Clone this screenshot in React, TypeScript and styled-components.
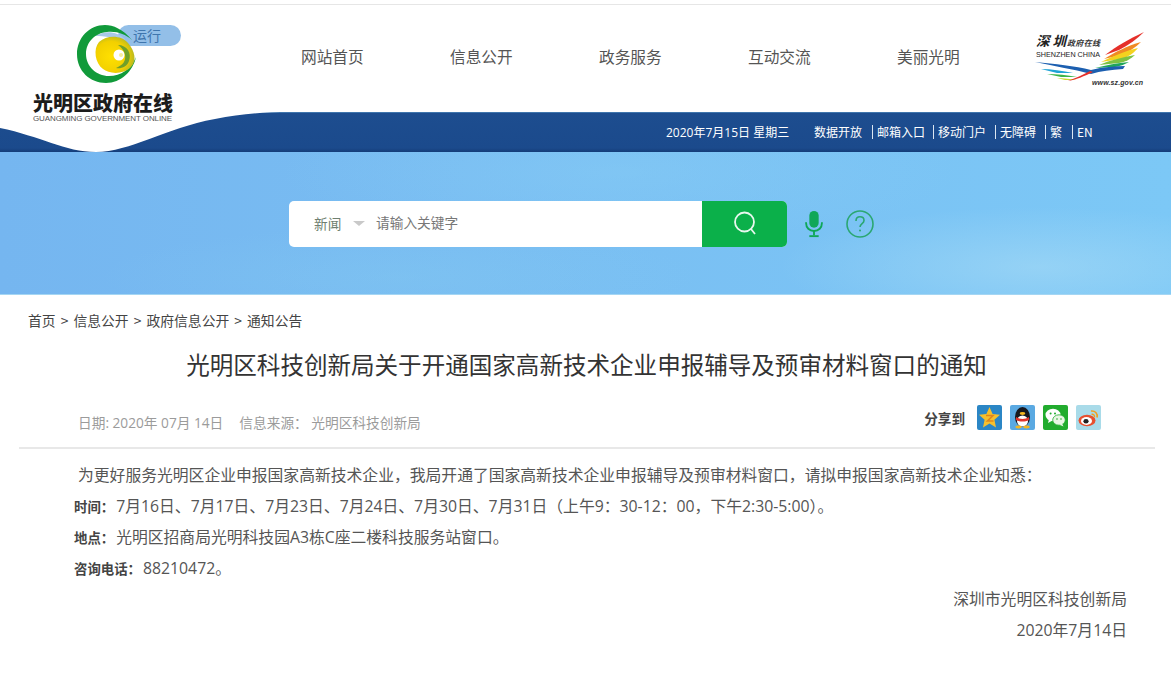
import styled, { createGlobalStyle } from 'styled-components'

const GlobalStyle = createGlobalStyle`
  html, body {
    margin: 0;
    padding: 0;
    background: #fff;
  }
  body {
    font-family: "Open Sans", "Noto Sans CJK SC", sans-serif;
    color: #555;
  }
`

const Page = styled.div`
  width: 1171px;
  height: 683px;
  overflow: hidden;
  background: #fff;
`

const Header = styled.header`
  position: relative;
  height: 152px;
  box-sizing: border-box;
  padding-top: 4px;
`

const TopLine = styled.div`
  height: 1px;
  background: #e6e6e6;
`

const TopRow = styled.div`
  display: flex;
  align-items: flex-start;
  height: 107px;
`

const LogoBlock = styled.div`
  position: relative;
  z-index: 2;
  width: 301px;
  flex: none;
  box-sizing: border-box;
  padding: 20px 0 0 33px;
`

const LogoMark = styled.svg`
  display: block;
  width: 148px;
  height: 60px;
`

const LogoTitle = styled.div`
  font-family: "Noto Sans CJK SC", sans-serif;
  font-size: 20px;
  line-height: 22px;
  font-weight: 900;
  color: #1c1c1c;
  white-space: nowrap;
  margin-top: 7px;
`

const LogoSub = styled.div`
  font-family: "Liberation Sans", sans-serif;
  font-size: 8px;
  line-height: 10px;
  color: #555;
  letter-spacing: -0.1px;
  white-space: nowrap;
`

const Nav = styled.nav`
  display: flex;
  gap: 86px;
  padding-top: 40px;
`

const NavItem = styled.a`
  font-family: "Noto Sans CJK SC", sans-serif;
  font-size: 15.7px;
  line-height: 24px;
  width: 63px;
  white-space: nowrap;
  color: #555;
`

const SzLogo = styled.svg`
  display: block;
  width: 114px;
  height: 62px;
  margin: 23px 0 0 73px;
  flex: none;
`

const Bar = styled.div`
  height: 40px;
  background: linear-gradient(180deg, #1d4d8f 0%, #1b4a8c 90%, #143c78 100%);
  border-top: 1px solid #3f75ad;
  box-sizing: border-box;
  display: flex;
  align-items: center;
  padding: 0 0 2px 666px;
  color: #fff;
  font-family: "Noto Sans CJK SC", sans-serif;
  font-size: 12px;
`

const BarDate = styled.span`
  width: 148px;
  flex: none;
  white-space: nowrap;
  font-family: "Open Sans", "Noto Sans CJK SC", sans-serif;
`

const BarLink = styled.a<{ $w: number }>`
  width: ${p => p.$w}px;
  flex: none;
  white-space: nowrap;
  box-sizing: border-box;
  padding-left: 4px;
  line-height: 14px;
  border-left: 1px solid #dbe6f2;

  &:first-of-type {
    border-left: 0;
    padding-left: 0;
  }
`

const Wave = styled.svg`
  position: absolute;
  left: 0;
  top: 112px;
  z-index: 1;
`

const Hero = styled.section`
  height: 143px;
  background:
    radial-gradient(ellipse 260px 60px at 1040px 115px, rgba(170, 220, 245, 0.55), transparent),
    radial-gradient(ellipse 340px 70px at 620px 20px, rgba(135, 205, 245, 0.45), transparent),
    radial-gradient(ellipse 300px 50px at 400px 125px, rgba(130, 200, 240, 0.4), transparent),
    linear-gradient(90deg, #75b6f0 0%, #79bdf2 40%, #7cc8f6 100%);
  border-bottom: 1px solid #a5d6f3;
  display: flex;
  align-items: flex-start;
  padding: 49px 0 0 289px;
  box-sizing: border-box;
`

const SearchBox = styled.div`
  display: flex;
  width: 498px;
  height: 46px;
  background: #fff;
  border-radius: 5px;
  overflow: hidden;
  flex: none;
`

const SearchScope = styled.div`
  display: flex;
  align-items: center;
  width: 87px;
  flex: none;
  padding: 0 0 3px 25px;
  box-sizing: border-box;
  font-family: "Noto Sans CJK SC", sans-serif;
  font-size: 13.7px;
  color: #6f7f70;
`

const Caret = styled.span`
  width: 0;
  height: 0;
  margin: 2px 0 0 12px;
  border: 6px solid transparent;
  border-top: 5px solid #c9c9c9;
  border-bottom: 0;
`

const SearchHint = styled.div`
  flex: 1;
  font-family: "Noto Sans CJK SC", sans-serif;
  font-size: 13.7px;
  line-height: 43px;
  color: #777;
`

const SearchButton = styled.button`
  width: 85px;
  flex: none;
  border: 0;
  padding: 0 0 2px;
  background: #0bb04a;
  display: flex;
  align-items: center;
  justify-content: center;
`

const MicIcon = styled.svg`
  display: block;
  flex: none;
  margin: 9px 0 0 16px;
`

const HelpIcon = styled.svg`
  display: block;
  flex: none;
  margin: 9px 0 0 21px;
`

const Main = styled.main`
  font-family: "Noto Sans CJK SC", sans-serif;
`

const Crumbs = styled.div`
  padding: 16px 0 0 28px;
  font-size: 13.8px;
  line-height: 18px;
  word-spacing: 2px;
  color: #444;
  white-space: nowrap;
`

const Title = styled.h1`
  margin: 18px 0 0;
  padding-left: 2px;
  text-align: center;
  font-size: 23.55px;
  line-height: 34px;
  font-weight: 400;
  color: #333;
  white-space: nowrap;
`

const MetaRow = styled.div`
  display: flex;
  align-items: center;
  justify-content: space-between;
  margin: 19px 16px 0 19px;
  padding: 0 54px 12px 59px;
  height: 35px;
  border-bottom: 2px solid #e8e8e8;
`

const Meta = styled.div`
  display: flex;
  gap: 16px;
  padding-top: 8px;
  font-family: "Open Sans", "Noto Sans CJK SC", sans-serif;
  font-size: 13.7px;
  color: #9b9b9b;
  white-space: nowrap;
`

const Share = styled.div`
  display: flex;
  align-items: center;
  gap: 8px;
`

const ShareLabel = styled.span`
  font-size: 13.6px;
  font-weight: 700;
  color: #444;
  margin-right: 4px;
`

const ShareIcon = styled.svg`
  display: block;
  width: 25px;
  height: 25px;
`

const Article = styled.article`
  padding: 11px 44px 0 74px;
  font-family: "Open Sans", "Noto Sans CJK SC", sans-serif;
  font-size: 15.8px;
  line-height: 31px;
  color: #555;
`

const Para = styled.p<{ $indent?: boolean; $right?: boolean }>`
  margin: 0;
  white-space: nowrap;
  padding-left: ${p => (p.$indent ? 4 : 0)}px;
  text-align: ${p => (p.$right ? 'right' : 'left')};
`

const Label = styled.strong`
  font-family: "Noto Sans CJK SC", sans-serif;
  font-size: 13.4px;
  font-weight: 700;
  color: #444;
  margin-right: 2px;
`

const navItems = ['网站首页', '信息公开', '政务服务', '互动交流', '美丽光明']
const barLinks = [
  { text: '数据开放', w: 58 },
  { text: '邮箱入口', w: 61 },
  { text: '移动门户', w: 62 },
  { text: '无障碍', w: 50 },
  { text: '繁', w: 27 },
  { text: 'EN', w: 30 },
]

const App = () => {
  return (
    <Page>
      <GlobalStyle />
      <Header>
        <TopLine />
        <TopRow>
          <LogoBlock>
            <LogoMark viewBox="0 0 148 60">
              <defs>
                <radialGradient id="blob" cx="0.4" cy="0.55" r="0.65">
                  <stop offset="0" stopColor="#ffe000" />
                  <stop offset="0.65" stopColor="#f2d000" />
                  <stop offset="1" stopColor="#a9b32a" />
                </radialGradient>
              </defs>
              <rect x="85" y="0" width="63" height="21" rx="10.5" fill="#93bfe8" />
              <text x="100" y="16" fontSize="14" fill="#3f75ad" fontFamily="Noto Sans CJK SC, sans-serif">运行</text>
              <path d="M62 11 C72 5 84 6 92 14 L90 18 C82 12 72 11 62 11 Z" fill="#a9c8e8" />
              <path d="M99 15 C90 4 80 0 72 0 C56 0 44 13 44 29 C44 46 57 58 73 58 C88 58 100 46 103 32 C98 44 88 51 76 51 C63 51 53 41 53 29 C53 17 62 8 74 7 C84 6 92 9 99 15 Z" fill="#119a3a" />
              <path d="M66 17 C74 10 88 10 95 18 C102 26 104 36 98 42 C90 50 76 49 70 44 C62 38 60 24 66 17 Z" fill="url(#blob)" />
              <path d="M85 20 C94 20 99 28 96 36 C94 42 88 44 83 43 C90 40 93 36 92 30 C91 25 88 22 85 20 Z" fill="#6f9f2a" />
              <circle cx="86" cy="30" r="5.5" fill="#fff" />
              <circle cx="88" cy="30" r="2" fill="#f7ee9a" />
            </LogoMark>
            <LogoTitle>光明区政府在线</LogoTitle>
            <LogoSub>GUANGMING GOVERNMENT ONLINE</LogoSub>
          </LogoBlock>
          <Nav>
            {navItems.map(item => (
              <NavItem key={item}>{item}</NavItem>
            ))}
          </Nav>
          <SzLogo viewBox="0 0 114 62">
            <text x="3" y="18" fontSize="13.5" fontStyle="italic" fontWeight="700" fill="#222" fontFamily="Noto Sans CJK SC, sans-serif" textLength="30">深圳</text>
            <text x="34" y="18" fontSize="8" fontStyle="italic" fontWeight="700" fill="#333" fontFamily="Noto Sans CJK SC, sans-serif" textLength="33">政府在线</text>
            <text x="3" y="29" fontSize="7.2" fill="#222" fontFamily="Liberation Sans, sans-serif" textLength="64">SHENZHEN CHINA</text>
            <path d="M111 4 C96 11 84 18 72 27 L86 22 C96 17 104 11 111 4 Z" fill="#e5302a" />
            <path d="M108 14 C94 18 82 24 71 31 L88 27 C96 24 103 19 108 14 Z" fill="#f08a24" />
            <path d="M105 20 C92 23 80 28 68 34 L88 31 C95 29 101 25 105 20 Z" fill="#f4d21f" />
            <path d="M102 27 C90 29 78 32 66 37 L86 35 C92 34 98 31 102 27 Z" fill="#7dc242" />
            <path d="M96 34 C84 35 74 37 62 40 L82 39 C88 38 92 36 96 34 Z" fill="#1fa65a" />
            <path d="M2 34 C22 36 42 38 58 42 C70 39 82 38 92 38 L90 41 C78 42 68 43 58 46 C40 41 20 38 2 34 Z" fill="#1c5fb0" />
            <path d="M8 41 C18 41 30 43 40 45 L24 45 Z" fill="#1fa3d6" />
            <path d="M14 46 C24 46 34 47 44 49 L28 49 Z" fill="#3db54a" />
            <path d="M24 50 C30 50 38 51 44 52 L32 52 Z" fill="#c6d92e" />
            <path d="M57 43 C50 47 42 50 35 53 C42 52 52 48 60 44 Z" fill="#e5302a" />
            <text x="59" y="57" fontSize="7" fontStyle="italic" fontWeight="700" fill="#333" fontFamily="Liberation Sans, sans-serif" textLength="51">www.sz.gov.cn</text>
          </SzLogo>
        </TopRow>
        <Bar>
          <BarDate>2020年7月15日 星期三</BarDate>
          {barLinks.map(link => (
            <BarLink key={link.text} $w={link.w}>{link.text}</BarLink>
          ))}
        </Bar>
        <Wave width="290" height="40" viewBox="0 0 290 40">
          <path d="M0 16 C40 24 65 40 96 40 C130 40 165 16 215 7 C240 2 262 0 290 0 L0 0 Z" fill="#fff" />
        </Wave>
      </Header>
      <Hero>
        <SearchBox>
          <SearchScope>新闻<Caret /></SearchScope>
          <SearchHint>请输入关键字</SearchHint>
          <SearchButton>
            <svg width="28" height="28" viewBox="0 0 28 28" fill="none" stroke="#e8f7ee" strokeWidth="1.8">
              <circle cx="13.5" cy="13" r="9.5" />
              <path d="M20 20 L24 25" />
            </svg>
          </SearchButton>
        </SearchBox>
        <MicIcon width="22" height="28" viewBox="0 0 22 30" fill="none" stroke="#0fa758" strokeWidth="2">
          <rect x="6" y="1" width="10" height="18" rx="5" fill="#0fa758" stroke="none" />
          <path d="M2.5 13 V14 C2.5 19 6 22.5 11 22.5 C16 22.5 19.5 19 19.5 14 V13" />
          <path d="M11 22.5 V27" />
          <path d="M6 28 H16" />
        </MicIcon>
        <HelpIcon width="28" height="28" viewBox="0 0 28 28" fill="none" stroke="#2ba772" strokeWidth="1.6">
          <circle cx="14" cy="14" r="13" />
          <path d="M10 11 C10 8 12 6.8 14 6.8 C16.5 6.8 18 8.4 18 10.4 C18 13.5 14 13.6 14 17" />
          <circle cx="14" cy="20.5" r="1" fill="#2ba772" stroke="none" />
        </HelpIcon>
      </Hero>
      <Main>
        <Crumbs>首页 &gt; 信息公开 &gt; 政府信息公开 &gt; 通知公告</Crumbs>
        <Title>光明区科技创新局关于开通国家高新技术企业申报辅导及预审材料窗口的通知</Title>
        <MetaRow>
          <Meta>
            <span>日期: 2020年 07月 14日</span>
            <span>信息来源： 光明区科技创新局</span>
          </Meta>
          <Share>
            <ShareLabel>分享到</ShareLabel>
            <ShareIcon viewBox="0 0 25 25">
              <rect width="25" height="25" rx="2" fill="#2b86c5" />
              <path d="M12.5 2 L15.6 9 L23 9.8 L17.4 14.8 L19 22.5 L12.5 18.6 L6 22.5 L7.6 14.8 L2 9.8 L9.4 9 Z" fill="#f6c02c" />
              <path d="M9 10.5 H16 L10.5 16 H16.5" fill="none" stroke="#e0861c" strokeWidth="1.6" />
            </ShareIcon>
            <ShareIcon viewBox="0 0 25 25">
              <rect width="25" height="25" rx="2" fill="#5aa9e2" />
              <ellipse cx="12.5" cy="12" rx="7.5" ry="10" fill="#15181f" />
              <ellipse cx="12.5" cy="16" rx="5.5" ry="5.5" fill="#fff" />
              <path d="M6 12 C10 14.5 15 14.5 19 12 L19 15 C15 17 10 17 6 15 Z" fill="#e0342c" />
              <ellipse cx="12.5" cy="8.5" rx="2.8" ry="1.4" fill="#f3b61f" />
              <ellipse cx="8.5" cy="22" rx="3.2" ry="1.4" fill="#f3b61f" />
              <ellipse cx="16.5" cy="22" rx="3.2" ry="1.4" fill="#f3b61f" />
            </ShareIcon>
            <ShareIcon viewBox="0 0 25 25">
              <rect width="25" height="25" rx="2" fill="#22ac2e" />
              <ellipse cx="10" cy="10" rx="7.5" ry="6.2" fill="#fff" />
              <path d="M6 14 L5 18 L9.5 15.5 Z" fill="#fff" />
              <ellipse cx="16" cy="15" rx="6.3" ry="5.2" fill="#e9f6e4" stroke="#22ac2e" strokeWidth="0.8" />
              <path d="M19 18.5 L20.5 21.5 L16.5 19.8 Z" fill="#e9f6e4" />
              <circle cx="7.6" cy="8.4" r="1" fill="#22ac2e" />
              <circle cx="12" cy="8.4" r="1" fill="#22ac2e" />
              <circle cx="14" cy="14" r="0.8" fill="#22ac2e" />
              <circle cx="18" cy="14" r="0.8" fill="#22ac2e" />
            </ShareIcon>
            <ShareIcon viewBox="0 0 25 25">
              <rect width="25" height="25" rx="2" fill="#a9dbe9" />
              <ellipse cx="11" cy="15.5" rx="8.5" ry="5.8" fill="#e8502f" />
              <ellipse cx="10.5" cy="16" rx="5.5" ry="3.9" fill="#fff" />
              <ellipse cx="10" cy="16.2" rx="2.6" ry="2.2" fill="#222" />
              <path d="M15 6 C19 5.5 22 8.5 21 12.5" fill="none" stroke="#f0a01f" strokeWidth="1.6" />
              <path d="M15.5 9.3 C17.5 9 19 10.5 18.5 12.3" fill="none" stroke="#f0a01f" strokeWidth="1.3" />
            </ShareIcon>
          </Share>
        </MetaRow>
        <Article>
          <Para $indent>为更好服务光明区企业申报国家高新技术企业，我局开通了国家高新技术企业申报辅导及预审材料窗口，请拟申报国家高新技术企业知悉：</Para>
          <Para><Label>时间：</Label>7月16日、7月17日、7月23日、7月24日、7月30日、7月31日（上午9：30-12：00，下午2:30-5:00）。</Para>
          <Para><Label>地点：</Label>光明区招商局光明科技园A3栋C座二楼科技服务站窗口。</Para>
          <Para><Label>咨询电话：</Label>88210472。</Para>
          <Para $right>深圳市光明区科技创新局</Para>
          <Para $right>2020年7月14日</Para>
        </Article>
      </Main>
    </Page>
  )
}

export default App
